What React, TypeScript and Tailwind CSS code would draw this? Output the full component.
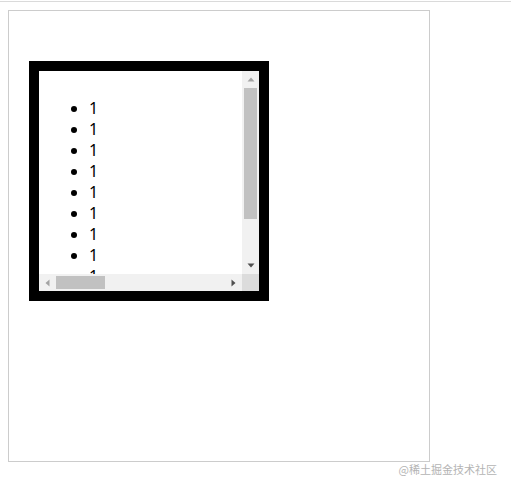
export default function App() {
  const items = Array.from({ length: 10 }, () => '1');

  return (
    <div className="w-[511px] h-[487px] bg-white pt-px font-['Noto_Sans','Noto_Sans_CJK_SC',sans-serif]">
      <div className="h-px bg-[#dadada]" />
      <div className="flex">
        <div className="ml-[8px] mt-[8px] w-[422px] h-[452px] border border-[#cccccc] pl-[20px] pt-[50px]">
          {/* scroll box */}
          <div className="w-[240px] h-[240px] border-[10px] border-black grid grid-cols-[1fr_17px] grid-rows-[1fr_17px]">
            <div className="overflow-hidden px-[10px] pt-[11px] text-[16px] leading-[21px] text-black">
              <ul className="list-disc pl-10 my-4">
                {items.map((t, i) => (
                  <li key={i}>{t}</li>
                ))}
              </ul>
            </div>

            {/* vertical scrollbar */}
            <div className="bg-[#f1f1f1] flex flex-col">
              <div className="h-[17px] flex items-center justify-center">
                <svg width="8" height="5" viewBox="0 0 8 5">
                  <path d="M0.5 4.5 L4 0.5 L7.5 4.5 Z" fill="#a3a3a3" />
                </svg>
              </div>
              <div className="flex-1 px-[2px]">
                <div className="h-[131px] bg-[#c1c1c1]" />
              </div>
              <div className="h-[17px] flex items-center justify-center">
                <svg width="8" height="5" viewBox="0 0 8 5">
                  <path d="M0.5 0.5 L4 4.5 L7.5 0.5 Z" fill="#505050" />
                </svg>
              </div>
            </div>

            {/* horizontal scrollbar */}
            <div className="bg-[#f1f1f1] flex">
              <div className="w-[17px] flex items-center justify-center">
                <svg width="5" height="8" viewBox="0 0 5 8">
                  <path d="M4.5 0.5 L0.5 4 L4.5 7.5 Z" fill="#a3a3a3" />
                </svg>
              </div>
              <div className="flex-1 py-[2px]">
                <div className="w-[49px] h-full bg-[#c1c1c1]" />
              </div>
              <div className="w-[17px] flex items-center justify-center">
                <svg width="5" height="8" viewBox="0 0 5 8">
                  <path d="M0.5 0.5 L4.5 4 L0.5 7.5 Z" fill="#505050" />
                </svg>
              </div>
            </div>
            <div className="bg-[#dcdcdc]" />
          </div>
        </div>
      </div>
      <div className="flex justify-end pr-[14px]">
        <span className="text-[11px] leading-[14px] text-[#b4b4b4] font-['Noto_Sans_CJK_SC',sans-serif]">
          @稀土掘金技术社区
        </span>
      </div>
    </div>
  );
}
